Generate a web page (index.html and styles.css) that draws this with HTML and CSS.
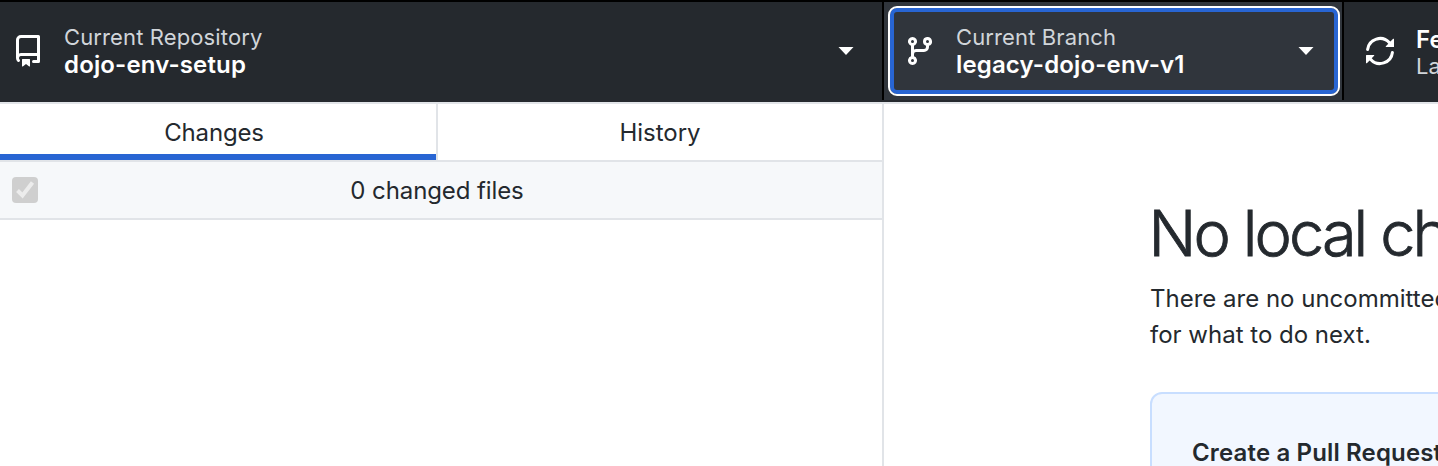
FILE: index.html
```html
<!DOCTYPE html>
<html lang="en">
<head>
<meta charset="utf-8">
<title>dojo-env-setup</title>
<link rel="stylesheet" href="styles.css">
</head>
<body>
<div class="app">
  <header class="toolbar">
    <div class="tool tool-repo">
      <svg class="icon" viewBox="0 0 16 16"><path d="M2 2.5A2.5 2.5 0 0 1 4.5 0h8.75a.75.75 0 0 1 .75.75v12.5a.75.75 0 0 1-.75.75h-2.5a.75.75 0 0 1 0-1.5h1.75v-2h-8a1 1 0 0 0-.714 1.7.75.75 0 1 1-1.072 1.05A2.495 2.495 0 0 1 2 11.5Zm10.5-1h-8a1 1 0 0 0-1 1v6.708A2.486 2.486 0 0 1 4.500 9h8ZM5 12.25a.25.25 0 0 1 .25-.25h3.500a.25.25 0 0 1 .25.25v3.250a.25.25 0 0 1-.4.200l-1.450-1.087a.249.249 0 0 0-.300 0L5.400 15.700a.25.25 0 0 1-.4-.200Z"/></svg>
      <div class="tool-text">
        <div class="label">Current Repository</div>
        <div class="name">dojo-env-setup</div>
      </div>
      <svg class="caret" viewBox="0 0 16 8"><path d="M.5 0h15L8 8z"/></svg>
    </div>
    <div class="tool tool-branch">
      <div class="focus-ring">
        <svg class="icon" viewBox="0 0 16 16"><path d="M9.500 3.250a2.250 2.250 0 1 1 3 2.122V6A2.500 2.500 0 0 1 10 8.500H6a1 1 0 0 0-1 1v1.128a2.251 2.251 0 1 1-1.500 0V5.372a2.250 2.250 0 1 1 1.500 0v1.836A2.493 2.493 0 0 1 6 7h4a1 1 0 0 0 1-1v-.628A2.250 2.250 0 0 1 9.500 3.250Zm-6 0a.75.75 0 1 0 1.500 0 .75.75 0 0 0-1.500 0Zm8.250-.75a.75.75 0 1 0 0 1.500.75.75 0 0 0 0-1.500ZM4.250 12a.75.75 0 1 0 0 1.500.75.75 0 0 0 0-1.500Z"/></svg>
        <div class="tool-text">
          <div class="label">Current Branch</div>
          <div class="name">legacy-dojo-env-v1</div>
        </div>
        <svg class="caret" viewBox="0 0 16 8"><path d="M.5 0h15L8 8z"/></svg>
      </div>
    </div>
    <div class="tool tool-fetch">
      <svg class="icon" viewBox="0 0 16 16"><path d="M1.705 8.005a.75.75 0 0 1 .834.656 5.500 5.500 0 0 0 9.592 2.970l-1.204-1.204a.25.25 0 0 1 .177-.427h3.646a.25.25 0 0 1 .25.25v3.646a.25.25 0 0 1-.427.177l-1.380-1.380A7.002 7.002 0 0 1 1.050 8.840a.75.75 0 0 1 .656-.834ZM8 2.500a5.487 5.487 0 0 0-4.131 1.869l1.204 1.204A.25.25 0 0 1 4.896 6H1.250A.25.25 0 0 1 1 5.750V2.104a.25.25 0 0 1 .427-.177l1.380 1.380A7.002 7.002 0 0 1 14.950 7.160a.75.75 0 0 1-1.490.178A5.500 5.500 0 0 0 8 2.500Z" transform="matrix(-1 0 0 1 16 0)"/></svg>
      <div class="tool-text">
        <div class="name">Fetch origin</div>
        <div class="label">Last fetched just now</div>
      </div>
    </div>
  </header>
  <div class="content">
    <aside class="sidebar">
      <nav class="tabs">
        <div class="tab tab-active"><span>Changes</span></div>
        <div class="tab"><span>History</span></div>
      </nav>
      <div class="list-header">
        <svg class="checkbox" viewBox="0 0 26 26"><rect class="box" width="26" height="26" rx="4"/><path class="tick" d="M5.500 13.500l5 5L20.500 5.500"/></svg>
        <span class="count">0 changed files</span>
      </div>
    </aside>
    <main class="main">
      <h1 class="title">No local changes</h1>
      <p class="intro">There are no uncommitted changes<br>for what to do next.</p>
      <section class="card"><h2 class="card-title">Create a Pull Request</h2></section>
    </main>
  </div>
</div>
</body>
</html>
```
FILE: styles.css
```css
* { box-sizing: border-box; }
body {
  margin: 0;
  overflow: hidden;
  background: #fff;
  color: #24292e;
  font-family: Inter, "Liberation Sans", sans-serif;
  font-size: 24px;
}
.app { width: 1438px; height: 466px; display: flex; flex-direction: column; overflow: hidden; }
.toolbar {
  display: flex;
  flex: none;
  height: 104px;
  background: #25292e;
  border-top: 2px solid #000;
  border-bottom: 2px solid #e1e4e8;
}
.tool { display: flex; flex: none; align-items: center; height: 98px; white-space: nowrap; }
.tool-repo { width: 884px; padding: 0 28px 0 12px; border-right: 2px solid #000; }
.tool-branch { width: 460px; padding: 4px 2px 4px 4px; background: #30353c; border-right: 2px solid #000; }
.focus-ring {
  display: flex;
  align-items: center;
  width: 452px;
  height: 90px;
  padding: 0 24px 0 10px;
  border: 2px solid #fff;
  border-radius: 9px;
  box-shadow: inset 0 0 0 4px #2865d3;
}
.tool-branch .icon { margin-left: 4px; }
.tool-fetch { width: 300px; padding-left: 20px; }
.icon { width: 32px; height: 32px; flex: none; fill: #fff; }
.tool-text { flex: 1; margin-left: 20px; padding-bottom: 2px; }
.tool-fetch .tool-text { padding: 2px 0 0; }
.tool-fetch .label { line-height: 26px; }
.label { font-size: 22px; line-height: 28px; letter-spacing: .12px; color: #d1d5da; }
.name { font-size: 24px; line-height: 27px; letter-spacing: .15px; font-weight: 600; color: #fff; }
.caret { width: 16px; height: 8px; flex: none; fill: #fff; }
.content { display: flex; flex: 1; min-height: 0; }
.sidebar { width: 884px; flex: none; border-right: 2px solid #e1e4e8; }
.tabs { display: flex; height: 58px; border-bottom: 2px solid #e1e4e8; }
.tab { display: flex; flex: 1; align-items: center; justify-content: center; }
.tab-active { flex: none; width: 438px; padding-right: 8px; letter-spacing: -.15px; border-right: 2px solid #e1e4e8; box-shadow: inset 0 -6px #2865d3; }
.list-header {
  display: flex;
  align-items: center;
  height: 58px;
  padding-left: 12px;
  background: #f6f8fa;
  border-bottom: 2px solid #e1e4e8;
}
.checkbox { width: 26px; height: 26px; }
.box { fill: #cfcfcf; }
.tick { fill: none; stroke: #ececec; stroke-width: 4; }
.count { flex: 1; text-align: center; padding-right: 46px; letter-spacing: -.1px; }
.main { flex: none; width: 800px; padding: 89px 0 0 266px; white-space: nowrap; }
.title {
  margin: 0 0 0 -1.5px;
  font-size: 63px;
  line-height: 80px;
  font-weight: 300;
  letter-spacing: -2.9px;
  -webkit-text-stroke: .8px #24292e;
}
.intro { margin: 8px 0 0; line-height: 36px; }
.card { margin-top: 39px; height: 200px; padding: 41px 40px; border: 2px solid #c8deff; border-radius: 12px; background: #f2f7ff; }
.card-title { margin: 0; font-size: 24px; line-height: 36px; font-weight: 600; letter-spacing: .15px; }
```
